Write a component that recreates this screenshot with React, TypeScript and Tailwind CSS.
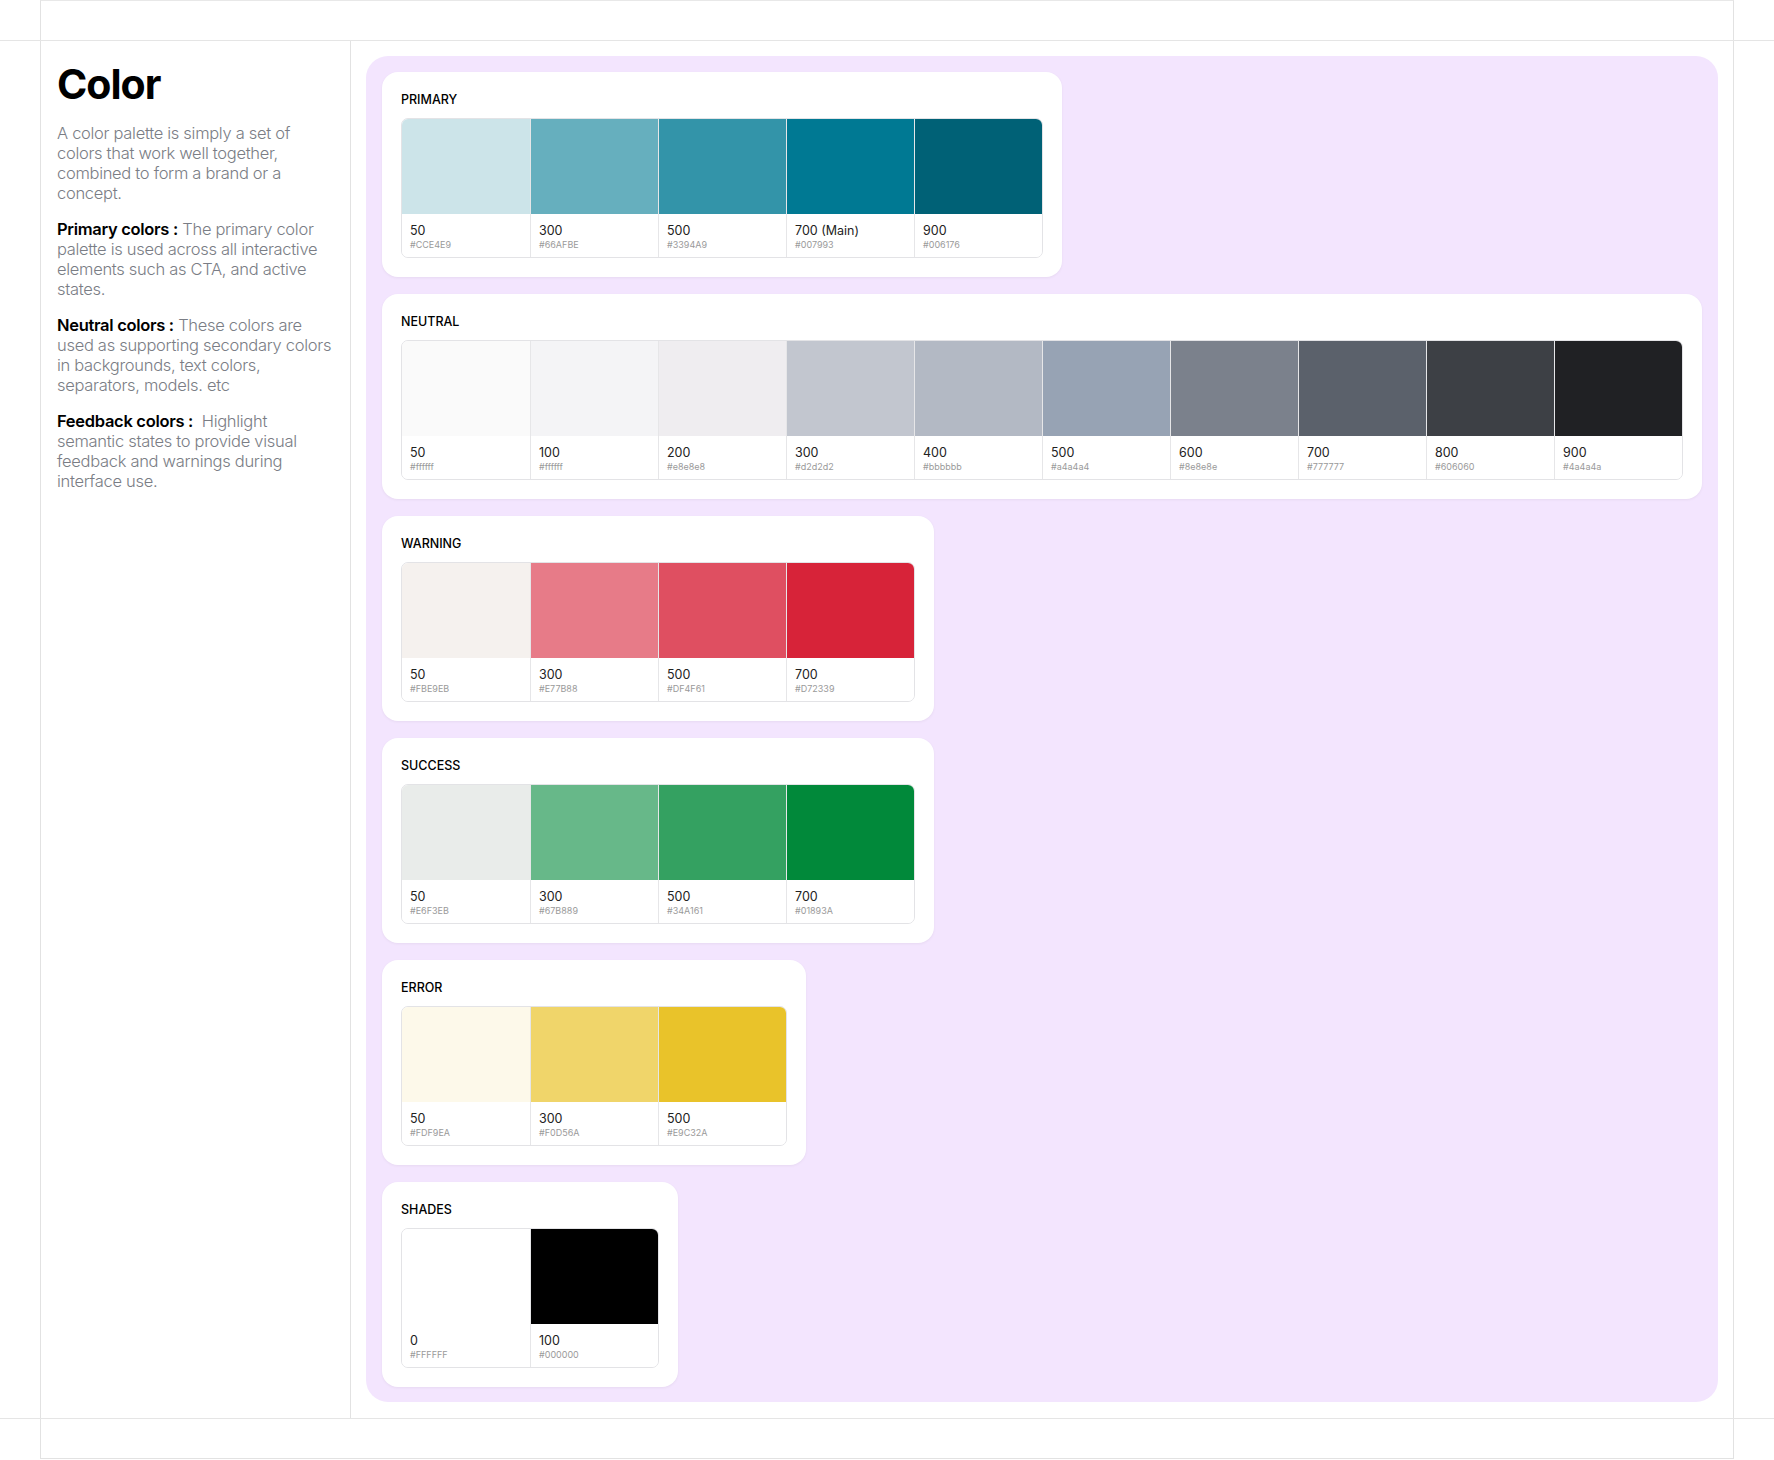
import React from "react";

type Sw = { n: string; hex: string; c: string };
const groups: { title: string; items: Sw[] }[] = [
  { title: "PRIMARY", items: [
    { n: "50", hex: "#CCE4E9", c: "#CCE4E9" },
    { n: "300", hex: "#66AFBE", c: "#66AFBE" },
    { n: "500", hex: "#3394A9", c: "#3394A9" },
    { n: "700 (Main)", hex: "#007993", c: "#007993" },
    { n: "900", hex: "#006176", c: "#006176" },
  ]},
  { title: "NEUTRAL", items: [
    { n: "50", hex: "#ffffff", c: "#fafafa" },
    { n: "100", hex: "#ffffff", c: "#f4f4f6" },
    { n: "200", hex: "#e8e8e8", c: "#efedf0" },
    { n: "300", hex: "#d2d2d2", c: "#c2c6cf" },
    { n: "400", hex: "#bbbbbb", c: "#b3b9c4" },
    { n: "500", hex: "#a4a4a4", c: "#97a3b4" },
    { n: "600", hex: "#8e8e8e", c: "#7b818c" },
    { n: "700", hex: "#777777", c: "#5b616b" },
    { n: "800", hex: "#606060", c: "#3d4045" },
    { n: "900", hex: "#4a4a4a", c: "#202124" },
  ]},
  { title: "WARNING", items: [
    { n: "50", hex: "#FBE9EB", c: "#f5f1ee" },
    { n: "300", hex: "#E77B88", c: "#E77B88" },
    { n: "500", hex: "#DF4F61", c: "#DF4F61" },
    { n: "700", hex: "#D72339", c: "#D72339" },
  ]},
  { title: "SUCCESS", items: [
    { n: "50", hex: "#E6F3EB", c: "#e9ecea" },
    { n: "300", hex: "#67B889", c: "#67B889" },
    { n: "500", hex: "#34A161", c: "#34A161" },
    { n: "700", hex: "#01893A", c: "#01893A" },
  ]},
  { title: "ERROR", items: [
    { n: "50", hex: "#FDF9EA", c: "#FDF9EA" },
    { n: "300", hex: "#F0D56A", c: "#F0D56A" },
    { n: "500", hex: "#E9C32A", c: "#E9C32A" },
  ]},
  { title: "SHADES", items: [
    { n: "0", hex: "#FFFFFF", c: "#FFFFFF" },
    { n: "100", hex: "#000000", c: "#000000" },
  ]},
];

export default function App() {
  return (
    <div className="w-[1774px] h-[1460px] bg-white relative overflow-hidden" style={{ fontFamily: "Inter, 'Noto Sans', sans-serif" }}>
      <div className="absolute left-0 right-0 top-[40px] h-px bg-[#e5e5e5]" />
      <div className="absolute left-0 right-0 top-[1418px] h-px bg-[#e5e5e5]" />
      <div className="ml-[40px] w-[1694px] h-[1459px] border border-[#e2e2e2] border-t-[#e8e8e8]">
        <div className="mt-[40px] flex h-[1378px]">
          <div className="w-[310px] border-r border-[#e2e2e2] pl-[16px] pr-[16px] pt-[18px] text-[16.5px] leading-[20px] text-[#7a7d85] font-light tracking-[-0.3px]">
            <h1 className="text-[41px] leading-[50px] font-bold text-black tracking-[-1px] mb-[14px]">Color</h1>
            <p className="mb-[16px]">A color palette is simply a set of colors that work well together, combined to form a brand or a concept.</p>
            <p className="mb-[16px]"><b className="font-semibold text-black">Primary colors :</b> The primary color palette is used across all interactive elements such as CTA, and active states.</p>
            <p className="mb-[16px]"><b className="font-semibold text-black">Neutral colors :</b> These colors are used as supporting secondary colors in backgrounds, text colors, separators, models. etc</p>
            <p><b className="font-semibold text-black">Feedback colors :</b>&nbsp; Highlight semantic states to provide visual feedback and warnings during interface use.</p>
          </div>
          <div className="pl-[15px] pt-[15px]">
            <div className="w-[1352px] h-[1346px] bg-[#f3e5fe] rounded-[22px] p-[16px] flex flex-col items-start gap-[17px]">
              {groups.map((g) => (
                <div key={g.title} className="bg-white rounded-[16px] px-[19px] pt-[21px] pb-[19px] shadow-[0_1px_3px_rgba(0,0,0,0.05)]">
                  <div className="text-[12.5px] leading-[14px] font-medium text-black mb-[11px]">{g.title}</div>
                  <div className="flex border border-[#e3e3e6] rounded-[7px] overflow-hidden">
                    {g.items.map((s, i) => (
                      <div key={i} className={"w-[128px] " + (i > 0 ? "border-l border-[#e6e6e8]" : "")}>
                        <div className="h-[95px]" style={{ background: s.c }} />
                        <div className="h-[43px] px-[8px] pt-[9px] bg-white">
                          <div className="text-[12.5px] leading-[15px] text-[#222]">{s.n}</div>
                          <div className="text-[9px] leading-[12px] text-[#9a9a9a] mt-[1px]">{s.hex}</div>
                        </div>
                      </div>
                    ))}
                  </div>
                </div>
              ))}
            </div>
          </div>
        </div>
      </div>
    </div>
  );
}
